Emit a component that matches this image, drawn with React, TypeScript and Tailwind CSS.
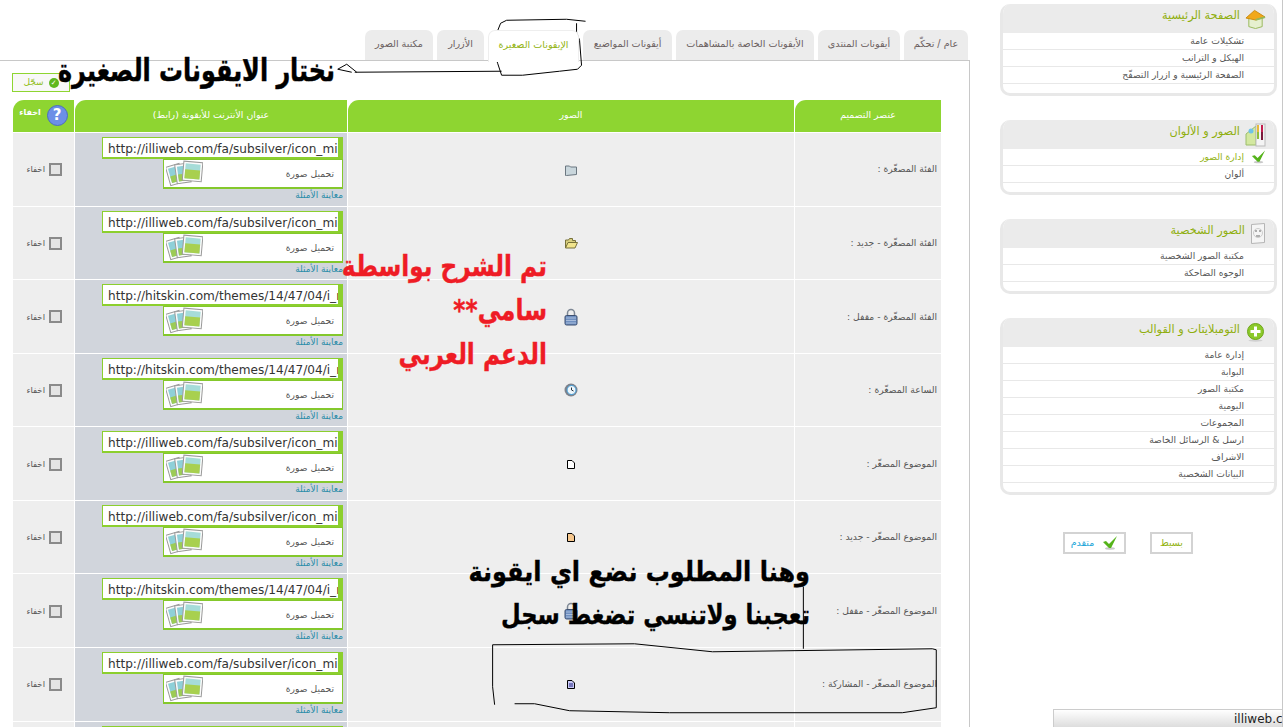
import React from "react";

const FONT = "font-['DejaVu_Sans',sans-serif]";

const tabs = [
  { label: "عام / تحكّم", w: "w-[64px]" },
  { label: "أيقونات المنتدى", w: "w-[82px]" },
  { label: "الأيقونات الخاصة بالمشاهمات", w: "w-[138px]" },
  { label: "أيقونات المواضيع", w: "w-[89px]" },
  { label: "الإيقونات الصغيرة", w: "w-[91px]", active: true },
  { label: "الأزرار", w: "w-[47px]" },
  { label: "مكتبة الصور", w: "w-[68px]" },
];

const ILLI = "http://illiweb.com/fa/subsilver/icon_mini";
const HIT = "http://hitskin.com/themes/14/47/04/i_mini";

const FolderIcon = () => (
  <svg width="14" height="12" viewBox="0 0 14 12">
    <path d="M1.5 2h4l1 1h6v7.5l-10 1h-1z" fill="#c9d6dc" stroke="#6b7780" />
  </svg>
);
const OpenFolderIcon = () => (
  <svg width="14" height="12" viewBox="0 0 14 12">
    <path d="M1.5 11V3h3l1-1.500h3v2h3v1.500" fill="#d8cf7e" stroke="#77713a" />
    <path d="M1.500 11l2.500-5.500h9.500l-2.500 5.500z" fill="#f1e48c" stroke="#77713a" />
  </svg>
);
const LockIcon = () => (
  <svg width="14" height="18" viewBox="0 0 14 18">
    <path d="M3.500 8V5a3.500 3.500 0 0 1 7 0v3" fill="none" stroke="#7d8794" strokeWidth="1.500" />
    <rect x="1" y="7.500" width="12" height="9.500" rx="1.500" fill="#6f8fc0" stroke="#3d4f70" />
    <path d="M2 10h10M2 12.500h10M2 15h10" stroke="#a9bddc" />
  </svg>
);
const ClockIcon = () => (
  <svg width="14" height="14" viewBox="0 0 14 14">
    <circle cx="7" cy="7" r="6.500" fill="#7d828c" />
    <circle cx="7.500" cy="7" r="4.500" fill="#eef6fb" stroke="#3f9bd6" />
    <path d="M7.500 4.500V7l2 1" fill="none" stroke="#26323f" />
  </svg>
);
const DocIcon = ({ fill, lines }: { fill: string; lines?: boolean }) => (
  <svg width="8" height="9" viewBox="0 0 8 9">
    <path d="M.5.500h4.500l2.500 2.500v5.500h-7z" fill={fill} stroke="#000" />
    {lines && <path d="M2 4h4M2 6h4" stroke="#222280" />}
  </svg>
);

const rows = [
  { label: "الفئة المصغّرة :", url: ILLI, icon: <FolderIcon /> },
  { label: "الفئة المصغّرة - جديد :", url: ILLI, icon: <OpenFolderIcon /> },
  { label: "الفئة المصغّرة - مقفل :", url: HIT, icon: <LockIcon /> },
  { label: "الساعة المصغّرة :", url: HIT, icon: <ClockIcon /> },
  { label: "الموضوع المصغّر :", url: ILLI, icon: <DocIcon fill="#ffffff" /> },
  { label: "الموضوع المصغّر - جديد :", url: ILLI, icon: <DocIcon fill="#f7c88e" /> },
  { label: "الموضوع المصغّر - مقفل :", url: HIT, icon: <LockIcon /> },
  { label: "الموضوع المصغّر - المشاركة :", url: ILLI, icon: <DocIcon fill="#c9c9f5" lines /> },
  { label: "الموضوع المصغّر - إعلان :", url: ILLI, icon: <DocIcon fill="#ffffff" /> },
];

const PhotosIcon = () => (
  <svg width="37" height="27" viewBox="0 0 37 27">
    <g stroke="#9a9a9a" fill="#fbfbfb">
      <g transform="rotate(-16 9 15)">
        <rect x="2" y="5" width="14" height="19" />
        <rect x="4" y="7" width="10" height="15" fill="#8fd0d8" stroke="none" />
        <rect x="4" y="15" width="10" height="7" fill="#9ccb55" stroke="none" />
      </g>
      <g transform="rotate(-8 16 14)">
        <rect x="10" y="4" width="14" height="19" />
        <rect x="12" y="6" width="10" height="15" fill="#8fd0d8" stroke="none" />
        <rect x="12" y="14" width="10" height="7" fill="#9ccb55" stroke="none" />
      </g>
      <g transform="rotate(5 27 12)">
        <rect x="17" y="2" width="19" height="19" />
        <rect x="19" y="4" width="15" height="15" fill="#a6dcd8" stroke="none" />
        <rect x="19" y="10" width="15" height="9" fill="#a8d04f" stroke="none" />
      </g>
    </g>
  </svg>
);

const CheckMark = ({ className }: { className: string }) => (
  <svg className={className} viewBox="0 0 16 14">
    <ellipse cx="8" cy="12.500" rx="5" ry="1.200" fill="#c9c9c9" />
    <path d="M1 6l3-1 3 3 8-8-6 12H7z" fill="#55b31a" />
  </svg>
);

const HomeIcon = () => (
  <svg width="22" height="20" viewBox="0 0 22 20">
    <path d="M4 9v9l7 2 7-2V9l-7-4z" fill="#e6f0cf" stroke="#97b85a" />
    <path d="M1 9l9-8 11 7-10 3z" fill="#f1a81a" stroke="#c98a10" />
    <path d="M11 11l10-3" stroke="#97b85a" strokeWidth="2" />
  </svg>
);
const PaletteIcon = () => (
  <svg width="21" height="24" viewBox="0 0 21 24">
    <path d="M1 11l10-8v19H1z" fill="#d3e8a0" stroke="#9cbd6b" />
    <rect x="11" y="1" width="9" height="22" fill="#f4f4f4" stroke="#bbb" />
    <path d="M13 2v7" stroke="#e8b93a" strokeWidth="2" />
    <path d="M13 9v7" stroke="#8fbf3a" strokeWidth="2" />
    <path d="M17 2v7" stroke="#c21f4e" strokeWidth="2" />
    <path d="M17 9v8" stroke="#7a1a3a" strokeWidth="2" />
    <circle cx="6" cy="8" r="2.500" fill="#6fc3e8" />
  </svg>
);
const ProfileIcon = () => (
  <svg width="14" height="21" viewBox="0 0 14 21">
    <path d="M.5 1.500l13-1v19l-13 1z" fill="#f5f5f5" stroke="#b5b5b5" />
    <path d="M4 8h2M8 8h2M5 13h4" stroke="#666" />
    <circle cx="7" cy="10" r="4.500" fill="none" stroke="#ccc" />
  </svg>
);
const PlusIcon = () => (
  <svg width="17" height="19" viewBox="0 0 17 19">
    <ellipse cx="8.500" cy="17.500" rx="7" ry="1.200" fill="#d0d0d0" />
    <circle cx="8.500" cy="8.500" r="8" fill="#8bc92a" stroke="#6ea51a" />
    <path d="M8.500 3.500v10M3.500 8.500h10" stroke="#fff" strokeWidth="3" />
  </svg>
);

const menus = [
  { title: "الصفحة الرئيسية", icon: <HomeIcon />, iconW: "w-[21px]", items: ["تشكيلات عامة", "الهيكل و الترانب", "الصفحة الرئيسية و ازرار التصفّح"], mb: "mb-[24px]" },
  { title: "الصور و الألوان", icon: <PaletteIcon />, iconW: "w-[21px]", items: ["إدارة الصور", "ألوان"], active: "إدارة الصور", mb: "mb-[24px]" },
  { title: "الصور الشخصية", icon: <ProfileIcon />, iconW: "w-[16px]", items: ["مكتبة الصور الشخصية", "الوجوه الضاحكة"], mb: "mb-[24px]" },
  {
    title: "التومبلايتات و القوالب",
    icon: <PlusIcon />,
    iconW: "w-[21px]",
    items: ["إدارة عامة", "البوابة", "مكتبة الصور", "اليومية", "المجموعات", "ارسل & الرسائل الخاصة", "الاشراف", "البيانات الشخصية"],
    mb: "mb-[37px]",
  },
];

const headCell = "h-[32px] bg-[#8ed531] rounded-tl-[11px] flex items-center justify-center text-white text-[9.400px] pb-[1px]";

export default function App() {
  return (
    <div dir="rtl" className={`relative h-[727px] overflow-hidden bg-white flex items-start border-r border-[#c8c8c8] ${FONT}`}>
      {/* sidebar */}
      <aside className="w-[277px] ml-[30px] mr-[5px] mt-[4px] shrink-0">
        {menus.map((m) => (
          <div key={m.title} className={`${m.mb} rounded-[10px] border-[3px] border-t-0 border-[#e8e8e8] bg-white overflow-hidden`}>
            <div className="h-[29px] bg-[#ebebeb] -mx-[3px] flex items-center pr-[11px] gap-[5px]">
              <span className={`${m.iconW} flex justify-center`}>{m.icon}</span>
              <span className="pb-[4px] text-[11.300px] text-[#8fae0c] whitespace-nowrap">{m.title}</span>
            </div>
            {m.items.map((it) => (
              <div key={it} className="relative h-[17px] border-b border-[#e8e8e8] pr-[30px] pb-[1px] flex items-center text-[9.200px] text-[#555] whitespace-nowrap">
                {m.active === it ? <span className="text-[#93b312]">{it}</span> : it}
                {m.active === it && <CheckMark className="absolute right-[8px] top-[1px] w-[15px] h-[14px]" />}
              </div>
            ))}
            <div className="h-[9px]" />
          </div>
        ))}
        <div className="flex justify-start gap-[24px] pr-[84px]">
          <button className="w-[43px] h-[22px] border-[2px] border-[#d3d3d3] text-[9.500px] text-[#93b312]">بسيط</button>
          <button className="w-[63px] h-[22px] border-[2px] border-[#d3d3d3] text-[9.500px] text-[#1aa5d8] flex items-center justify-center gap-[8px]">
            <CheckMark className="w-[16px] h-[14px]" />
            متقدم
          </button>
        </div>
      </aside>

      {/* main column */}
      <main className="w-[970px] shrink-0 pt-[30px]">
        <div className="flex gap-[4px] pr-[2px] h-[31px] relative z-10">
          {tabs.map((t) => (
            <div
              key={t.label}
              className={`${t.w} rounded-t-[7px] flex items-center justify-center text-[9.600px] whitespace-nowrap ${
                t.active ? "h-[32px] pb-[3px] bg-white text-[#93b312] border border-b-0 border-[#eeeeee]" : "h-[30px] pb-[1px] bg-[#ececec] text-[#6b6060]"
              }`}
            >
              {t.label}
            </div>
          ))}
        </div>
        <div className="border-t border-r border-[#c8c8c8] -mt-[1px] pl-[13px] pr-[28px] pt-[12px] h-[700px]">
          <div className="flex justify-end">
            <button className="-ml-[1px] w-[58px] h-[19px] border border-[#8ed531] bg-[#f8f8f8] flex items-center justify-center gap-[5px] text-[9px] text-[#93c01f]">
              <span className="w-[10px] h-[10px] rounded-full bg-[#5fb81e] text-white text-[7px] leading-[10px]">✓</span>
              سجّل
            </button>
          </div>
          <div className="mt-[8px] grid grid-cols-[146px_446px_272px_61px] gap-[1px]">
            <div className={headCell}>عنصر التصميم</div>
            <div className={headCell}>الصور</div>
            <div className={headCell}>عنوان الأنترنت للأيقونة (رابط)</div>
            <div className={`${headCell} gap-[6px]`}>
              <span className="w-[21px] h-[21px] rounded-full bg-[#6c8fe6] border border-[#4c6cc0] text-white text-[15px] font-bold leading-[19px] text-center">?</span>
              <span className="-mt-[6px] font-bold text-[8px]">اخفاء</span>
            </div>
            {rows.map((r) => (
              <React.Fragment key={r.label}>
                <div className="h-[72.570px] bg-[#eeeeee] flex items-center pr-[4px] text-[9.200px] text-[#555] whitespace-nowrap">{r.label}</div>
                <div className="h-[72.570px] bg-[#eeeeee] flex items-center justify-center pt-[1px]">{r.icon}</div>
                <div className="h-[72.570px] bg-[#d1d5dc] flex flex-col items-start pr-[4px] pt-[4px]">
                  <div dir="ltr" className="w-[241px] h-[22px] bg-white border border-b-2 border-r-[5px] border-[#8ccf2e] pl-[5px] text-[12.100px] leading-[22px] text-[#333] overflow-hidden whitespace-nowrap">
                    {r.url}
                  </div>
                  <div className="w-[180px] h-[30px] bg-white border border-b-2 border-[#84c82c] flex items-center justify-between pr-[8px] pl-[2px] text-[9.200px] text-[#555]">
                    <span className="pt-[1px]">تحميل صورة</span>
                    <PhotosIcon />
                  </div>
                  <span className="text-[9px] text-[#2a8ca8] whitespace-nowrap">معاينة الأمثلة</span>
                </div>
                <div className="h-[72.570px] bg-[#eeeeee] flex items-center pr-[12px] pt-[1px] gap-[4px] text-[8.500px] text-[#555]">
                  <span className="w-[13px] h-[13px] border-2 border-[#8a8a8a] bg-[#e4e4e4] shrink-0" />
                  اخفاء
                </div>
              </React.Fragment>
            ))}
          </div>
        </div>
      </main>

      {/* hand-made notes over the screenshot */}
      <svg className="absolute inset-0 w-full h-full pointer-events-none" viewBox="0 0 1283 727" fill="none" stroke="#000" strokeWidth="1">
        <path d="M586 21L567 19L507 20L501 23L497 33L494 50L498 63L502 75L523 75L560 71L578 69L582 65L580 40L577 32L577 23" />
        <path d="M502 71L355 72M338 69L347 64L357 72M338 69L352 72" />
        <path d="M495 705L493 687L493 645L635 644L713 652L933 649L937 650L937 708L903 713L670 713L570 711L535 704L515 704" />
        <path d="M804 587V649" />
      </svg>
      <div className="absolute left-[57px] top-[45px] w-[278px] text-[31px] leading-[50px] font-bold text-black whitespace-nowrap origin-right scale-x-[0.77] [-webkit-text-stroke:0.5px_#000]">نختار الايقونات الصغيرة</div>
      <div className="absolute left-[343px] top-[244px] w-[204px] text-[29px] leading-[44px] font-bold text-[#ee1c25] whitespace-nowrap origin-right scale-x-[0.8] [-webkit-text-stroke:0.4px_#ee1c25]">
        <div>تم الشرح بواسطة</div>
        <div>سامي**</div>
        <div>الدعم العربي</div>
      </div>
      <div className="absolute left-[470px] top-[550px] w-[340px] text-[27px] leading-[43px] font-bold text-black whitespace-nowrap [-webkit-text-stroke:0.4px_#000]">
        <div className="origin-right scale-x-[0.888]">وهنا المطلوب نضع اي ايقونة</div>
        <div className="origin-right scale-x-[0.837]">تعجبنا ولاتنسي تضغط سجل</div>
      </div>

      {/* status bubble */}
      <div dir="ltr" className="absolute left-[1053px] top-[709px] w-[230px] h-[18px] border-t border-l border-[#cccccc] bg-gradient-to-b from-white to-[#dddddd] pl-[180px] text-[12px] leading-[18px] text-[#222] whitespace-nowrap overflow-hidden">
        illiweb.com
      </div>
    </div>
  );
}
